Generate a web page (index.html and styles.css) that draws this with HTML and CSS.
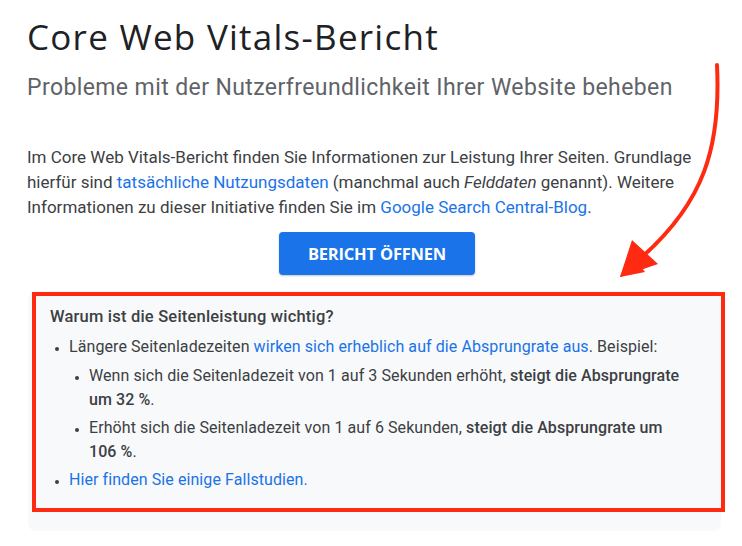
FILE: index.html
```html
<!DOCTYPE html>
<html lang="de">
<head>
  <meta charset="UTF-8">
  <meta name="viewport" content="width=device-width, initial-scale=1.0">
  <title>Core Web Vitals-Bericht</title>
  <link rel="stylesheet" href="styles.css">
</head>
<body>
  <div class="page">
    <h1>Core Web Vitals-Bericht</h1>
    <p class="subtitle">Probleme mit der Nutzerfreundlichkeit Ihrer Website beheben</p>

    <p class="intro">
      Im Core Web Vitals-Bericht finden Sie Informationen zur Leistung Ihrer Seiten. Grundlage
      hierfür sind <a href="#">tatsächliche Nutzungsdaten</a> (manchmal auch <em>Felddaten</em> genannt). Weitere
      Informationen zu dieser Initiative finden Sie im <a href="#">Google Search Central-Blog</a>.
    </p>

    <div class="actions">
      <button>Bericht öffnen</button>
    </div>

    <div class="panel">
      <div class="callout">
        <p class="callout-title">Warum ist die Seitenleistung wichtig?</p>
        <ul>
          <li>Längere Seitenladezeiten <a href="#">wirken sich erheblich auf die Absprungrate aus</a>. Beispiel:
            <ul>
              <li>Wenn sich die Seitenladezeit von 1 auf 3 Sekunden erhöht, <strong>steigt die Absprungrate um 32&nbsp;%</strong>.</li>
              <li>Erhöht sich die Seitenladezeit von 1 auf 6 Sekunden, <strong>steigt die Absprungrate um 106&nbsp;%</strong>.</li>
            </ul>
          </li>
          <li><a href="#">Hier finden Sie einige Fallstudien.</a></li>
        </ul>
      </div>
    </div>

    <!-- annotation arrow -->
    <svg class="arrow" width="140" height="230" viewBox="0 0 140 230">
      <path d="M115 13 C119 95 102 150 40 205" fill="none" stroke="#ff2a12" stroke-width="4" stroke-linecap="round"/>
      <polygon points="18,225 28,200 43,220" fill="#ff2a12"/>
      <polygon points="18,225 30,188 56,212" fill="#ff2a12"/>
    </svg>
  </div>
</body>
</html>
```

FILE: styles.css
```css
body {
  margin: 0;
  font-family: Roboto, "Liberation Sans", sans-serif;
  color: #3c4043;
  background: #fff;
}
.page {
  position: relative;
  padding: 0 20px 0 27px;
}
h1 {
  margin: 0;
  padding-top: 14px;
  font-family: "Open Sans", Roboto, sans-serif;
  font-size: 35px;
  font-weight: 400;
  letter-spacing: 1.25px;
  color: #202124;
  line-height: 46px;
}
.subtitle {
  margin: 13px 0 0;
  font-size: 23px;
  letter-spacing: 0.4px;
  line-height: 30px;
  color: #5f6368;
}
.intro {
  margin: 42px 0 0;
  font-size: 17px;
  line-height: 25px;
}
a {
  color: #1a73e8;
  text-decoration: none;
}
.actions {
  display: flex;
  justify-content: center;
  margin-top: 12px;
}
button {
  background-color: #1a73e8;
  color: #fff;
  border: none;
  border-radius: 4px;
  height: 43px;
  width: 196px;
  margin-left: 5px;
  font-family: "Open Sans", Roboto, sans-serif;
  font-size: 16.5px;
  font-weight: 700;
  letter-spacing: -0.2px;
  text-transform: uppercase;
  box-shadow: 0 1px 2px rgba(60, 64, 67, 0.3);
}
.panel {
  margin: 16px 0 0 1px;
  width: 689px;
  background: #f8f9fa;
  border-radius: 8px;
  padding: 1px 0 19px 4px;
}
.callout {
  box-sizing: border-box;
  width: 693px;
  border: 4px solid #ff2a12;
  padding: 9px 16px 12px 14px;
  font-size: 16px;
  letter-spacing: 0.08px;
  line-height: 24px;
}
.callout-title {
  margin: 0 0 6px;
  font-size: 16.5px;
  letter-spacing: 0.2px;
  font-weight: 500;
}
.callout ul {
  margin: 0;
  padding-left: 19px;
  list-style: disc;
}
.callout li {
  margin-bottom: 4px;
}
.callout ul ul {
  margin-top: 5px;
  padding-left: 20px;
}
.callout li::marker {
  font-size: 12px;
}
strong {
  font-weight: 500;
}
.arrow {
  position: absolute;
  left: 602px;
  top: 52px;
}
```
